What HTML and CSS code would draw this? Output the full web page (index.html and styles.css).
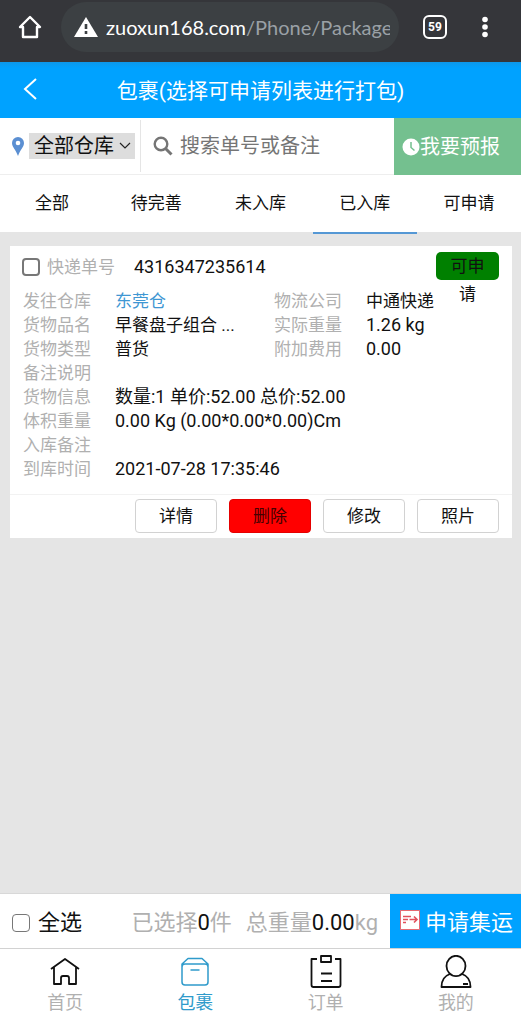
FILE: index.html
```html
<!DOCTYPE html>
<html lang="zh-CN">
<head>
<meta charset="utf-8">
<meta name="viewport" content="width=device-width, initial-scale=1">
<title>包裹</title>
<link rel="stylesheet" href="styles.css">
</head>
<body class="page">
<div class="browser">
  <button class="browser-btn" type="button" aria-label="Home"><svg width="24" height="26" viewBox="0 0 24 26" fill="none" stroke="#fff" stroke-width="2.4" stroke-linejoin="round" stroke-linecap="round"><path d="M2 13 12 3l10 10h-3v10H5V13Z"/></svg></button>
  <div class="address">
    <svg width="24" height="20" viewBox="0 0 24 20"><path d="M12 0 24 20H0Z" fill="#fff"/><path d="M12 7v5M12 14v3" stroke="#3c4043" stroke-width="2.6"/></svg>
    <div class="url"><span class="host">zuoxun168.com</span>/Phone/Package</div>
  </div>
  <button class="tab-count" type="button">59</button>
  <button class="browser-btn" type="button" aria-label="Menu"><svg width="6" height="22" viewBox="0 0 6 22" fill="#fff"><circle cx="3" cy="3.500" r="2.800"/><circle cx="3" cy="11" r="2.800"/><circle cx="3" cy="18.500" r="2.800"/></svg></button>
</div>

<header class="header">
  <a class="back" href="#" aria-label="返回"><svg width="14" height="22" viewBox="0 0 14 22" fill="none" stroke="#fff" stroke-width="2"><path d="M13 1 2 11l11 10"/></svg></a>
  <h1 class="title">包裹(选择可申请列表进行打包)</h1>
</header>

<div class="search">
  <div class="depot">
    <svg width="12" height="19" viewBox="0 0 12 19"><path d="M6 0a6 6 0 0 1 6 6c0 4-4 7-6 13C4 13 0 10 0 6a6 6 0 0 1 6-6Z" fill="#5b8fd2"/><circle cx="6" cy="6" r="2.300" fill="#fff"/></svg>
    <span class="select-wrap">
      <select class="select" aria-label="仓库"><option>全部仓库</option></select>
      <svg class="chevron" width="12" height="8" viewBox="0 0 12 8" fill="none" stroke="#222" stroke-width="1.2"><path d="M1 1l5 5 5-5"/></svg>
    </span>
  </div>
  <label class="query">
    <svg width="20" height="20" viewBox="0 0 20 20" fill="none" stroke="#757575" stroke-width="2.400"><circle cx="8" cy="8" r="6.300"/><path d="m12.500 12.500 6 6" stroke-width="3"/></svg>
    <input class="query-input" type="text" placeholder="搜索单号或备注" aria-label="搜索单号或备注">
  </label>
  <button class="forecast" type="button"><svg width="18" height="18" viewBox="0 0 18 18"><circle cx="9" cy="9" r="8.500" fill="#fff"/><path d="M9 4v5.500l3.500 3" fill="none" stroke="#74c08f" stroke-width="1.500"/></svg><span class="raised">我要预报</span></button>
</div>

<nav class="tabs">
  <a class="tab" href="#">全部</a>
  <a class="tab" href="#">待完善</a>
  <a class="tab" href="#">未入库</a>
  <a class="tab tab-on" href="#">已入库</a>
  <a class="tab" href="#">可申请</a>
</nav>

<main class="list">
  <article class="card">
    <div class="card-head">
      <input class="check" type="checkbox" id="pkg">
      <label class="label track-label" for="pkg">快递单号</label>
      <span class="value latin">4316347235614</span>
      <a class="badge" href="#">可申请</a>
    </div>
    <dl class="info">
      <dt class="label">发往仓库</dt><dd class="value link">东莞仓</dd><dt class="label">物流公司</dt><dd class="value">中通快递</dd>
      <dt class="label">货物品名</dt><dd class="value">早餐盘子组合 ...</dd><dt class="label">实际重量</dt><dd class="value latin">1.26 kg</dd>
      <dt class="label">货物类型</dt><dd class="value">普货</dd><dt class="label">附加费用</dt><dd class="value latin">0.00</dd>
      <dt class="label">备注说明</dt><dd class="value wide"></dd>
      <dt class="label">货物信息</dt><dd class="value wide latin">数量:1 单价:52.00 总价:52.00</dd>
      <dt class="label">体积重量</dt><dd class="value wide latin">0.00 Kg (0.00*0.00*0.00)Cm</dd>
      <dt class="label">入库备注</dt><dd class="value wide"></dd>
      <dt class="label">到库时间</dt><dd class="value wide latin">2021-07-28 17:35:46</dd>
    </dl>
    <div class="actions">
      <button class="action" type="button">详情</button>
      <button class="action danger" type="button">删除</button>
      <button class="action" type="button">修改</button>
      <button class="action" type="button">照片</button>
    </div>
  </article>
</main>

<div class="summary">
  <div class="all"><input class="check" type="checkbox" id="all"><label class="raised" for="all">全选</label></div>
  <p class="totals"><span>已选择<b class="num">0</b>件</span><span>总重量<b class="num">0.00</b>kg</span></p>
  <button class="apply" type="button"><svg class="apply-icon" width="20" height="20" viewBox="0 0 20 20"><path d="M.5.500h19v19H.5Z" fill="#fff" stroke="#e66a72"/><path d="M3 6.500h8M3 9.500h5M3 12.500h3M9.500 9.500H17M14 6.500l3 3-3 3" fill="none" stroke="#e2505c" stroke-width="1.600"/></svg><span class="raised">申请集运</span></button>
</div>

<nav class="bottom">
  <a class="item" href="#"><svg width="32" height="36" viewBox="0 0 32 36" fill="none" stroke="#111" stroke-width="1.800" stroke-linejoin="round"><path d="M2 14 16 4l14 10M5 12.500V29h7v-6q0-2 2-2h4q2 0 2 2v6h7V12.500"/></svg>首页</a>
  <a class="item item-on" href="#"><svg width="32" height="36" viewBox="0 0 32 36" fill="none" stroke="#2f9bcb" stroke-width="1.500" stroke-linejoin="round"><path d="M3 9 9 3.500h14L29 9v18q0 3-3 3H6q-3 0-3-3ZM3 12q0-3 3-3h20q3 0 3 3M11.500 15h9"/></svg>包裹</a>
  <a class="item" href="#"><svg width="32" height="36" viewBox="0 0 32 36" fill="none" stroke="#111" stroke-width="1.800" stroke-linejoin="round"><path d="M7 4H1.500v26q0 2 2 2h25q2 0 2-2V4H25M11 1h10v6H11ZM11 18.500h11M11 26h11"/></svg>订单</a>
  <a class="item" href="#"><svg width="32" height="36" viewBox="0 0 32 36" fill="none" stroke="#111" stroke-width="1.800" stroke-linejoin="round"><ellipse cx="16" cy="11" rx="9.500" ry="10.200"/><path d="M10 19C4 21 1.500 26 1.500 32h29c0-6-2.500-11-8.500-13M23 29h5"/></svg>我的</a>
</nav>
</body>
</html>
```
FILE: styles.css
```css
* { box-sizing: border-box; }

.page {
  margin: 0;
  min-height: 100vh;
  display: flex;
  flex-direction: column;
  background: #e5e5e5;
  color: #111;
  font-family: Roboto, "Noto Sans CJK SC", sans-serif;
  font-size: 17px;
}

button, input, select { font: inherit; }
button { border: 0; padding: 0; cursor: pointer; }
a { color: inherit; text-decoration: none; }
svg { flex: none; }
.raised { padding-bottom: 2px; }

.browser {
  height: 62px;
  padding: 0 33px 8px 18px;
  display: flex;
  align-items: center;
  background: #35363a;
}
.browser-btn { display: flex; background: none; }
.address {
  flex: 1;
  min-width: 0;
  height: 50px;
  margin: 0 24px 0 19px;
  padding: 0 9px 0 13px;
  border-radius: 25px;
  display: flex;
  align-items: center;
  gap: 8px;
  background: #3c4043;
}
.url {
  flex: 1;
  overflow: hidden;
  white-space: nowrap;
  font-family: Lato, sans-serif;
  font-size: 20px;
  color: #9aa0a6;
}
.host { color: #fff; }
.tab-count {
  width: 24px;
  height: 24px;
  margin-right: 35px;
  border: 2px solid #fff;
  border-radius: 6px;
  background: none;
  color: #fff;
  font-size: 12px;
  font-weight: 700;
}
.header {
  height: 56px;
  padding: 0 23px 2px;
  display: grid;
  grid-template-columns: 16px 1fr 16px;
  align-items: center;
  background: linear-gradient(#0d98ea, #00a2ff 6px);
  color: #fff;
}
.back { display: flex; }
.title { margin: 0; text-align: center; font-size: 21px; font-weight: 400; white-space: nowrap; }

.search {
  height: 57px;
  display: flex;
  background: #fff;
  border-bottom: 1px solid #eee;
  font-size: 20px;
}
.depot {
  margin: 2px 0;
  padding: 0 5px 0 12px;
  display: flex;
  align-items: center;
  gap: 5px;
  border-right: 1px solid #e5e5e5;
}
.select-wrap { display: grid; align-items: center; }
.select {
  grid-area: 1 / 1;
  width: 106px;
  height: 26px;
  padding: 0 0 0 5px;
  border: 0;
  border-radius: 0;
  appearance: none;
  background: #ddd;
  color: #111;
  line-height: 26px;
}
.chevron { grid-area: 1 / 1; justify-self: end; margin-right: 4px; pointer-events: none; }
.query { flex: 1; min-width: 0; padding-left: 12px; display: flex; align-items: center; gap: 7px; }
.query-input { flex: 1; min-width: 0; padding: 0; border: 0; background: none; outline: 0; }
.query-input::placeholder { color: #757575; }
.forecast {
  width: 127px;
  margin-bottom: -1px;
  padding-left: 8px;
  display: flex;
  align-items: center;
  background: #74c08f;
  color: #fff;
}

.tabs { height: 57px; display: flex; background: #fff; }
.tab { flex: 1; text-align: center; line-height: 56px; }
.tab-on { height: 59px; border-bottom: 2px solid #5598d5; z-index: 1; }

.list { flex: 1; padding: 14px 9px 14px 10px; }
.card { background: #fff; }
.card-head { height: 43px; padding: 6px 13px 0 12px; display: flex; align-items: flex-start; line-height: 30px; }
.check {
  appearance: none;
  width: 18px;
  height: 18px;
  margin: 0;
  border: 2px solid #777;
  border-radius: 4px;
  background: #fff;
}
.card-head .check { margin-top: 6px; }
.label { color: #b0b0b0; }
.track-label { margin: 0 19px 0 7px; }
.latin { font-size: 18px; }
.badge {
  width: 63px;
  height: 28px;
  margin-left: auto;
  padding: 0 11px;
  border-radius: 5px;
  background: #008000;
  line-height: 28px;
  text-align: center;
  word-break: break-all;
}
.info {
  margin: 0;
  padding: 0 13px 13px;
  display: grid;
  grid-template-columns: 92px 159px 92px 1fr;
  grid-auto-rows: 24px;
  line-height: 24px;
  white-space: nowrap;
}
.info .value { margin: 0; }
.info .wide { grid-column: 2 / -1; }
.link { color: #3f97d3; }
.actions {
  padding: 4px 13px 5px;
  display: flex;
  justify-content: flex-end;
  gap: 12px;
  border-top: 1px solid #f2f2f2;
}
.action { width: 82px; height: 34px; padding-bottom: 3px; border: 1px solid #d2d2d2; border-radius: 4px; background: #fff; color: #111; }
.danger { border-color: #e50000; background: #f00; color: #400; }

.summary {
  height: 56px;
  display: flex;
  border-top: 1px solid #d8d8d8;
  border-bottom: 1px solid #d2d2d2;
  background: #fff;
  font-size: 22px;
}
.all { padding-left: 12px; display: flex; align-items: center; gap: 8px; }
.all .check { margin-top: 4px; border-width: 1px; }
.totals { flex: 1; margin: 0; padding: 0 12px 2px 0; display: flex; align-items: center; justify-content: flex-end; gap: 14px; color: #b0b0b0; white-space: nowrap; }
.num { color: #111; font-weight: 400; }
.apply { width: 131px; padding-left: 10px; display: flex; align-items: center; gap: 5px; background: #00a2ff; color: #fff; }
.apply-icon { margin-bottom: 2px; }

.bottom { height: 75px; padding-top: 6px; display: flex; background: #fff; font-size: 18px; }
.item { flex: 1; display: flex; flex-direction: column; align-items: center; line-height: 24px; color: #b0b0b0; }
.item-on { color: #2f9bcb; }
```
